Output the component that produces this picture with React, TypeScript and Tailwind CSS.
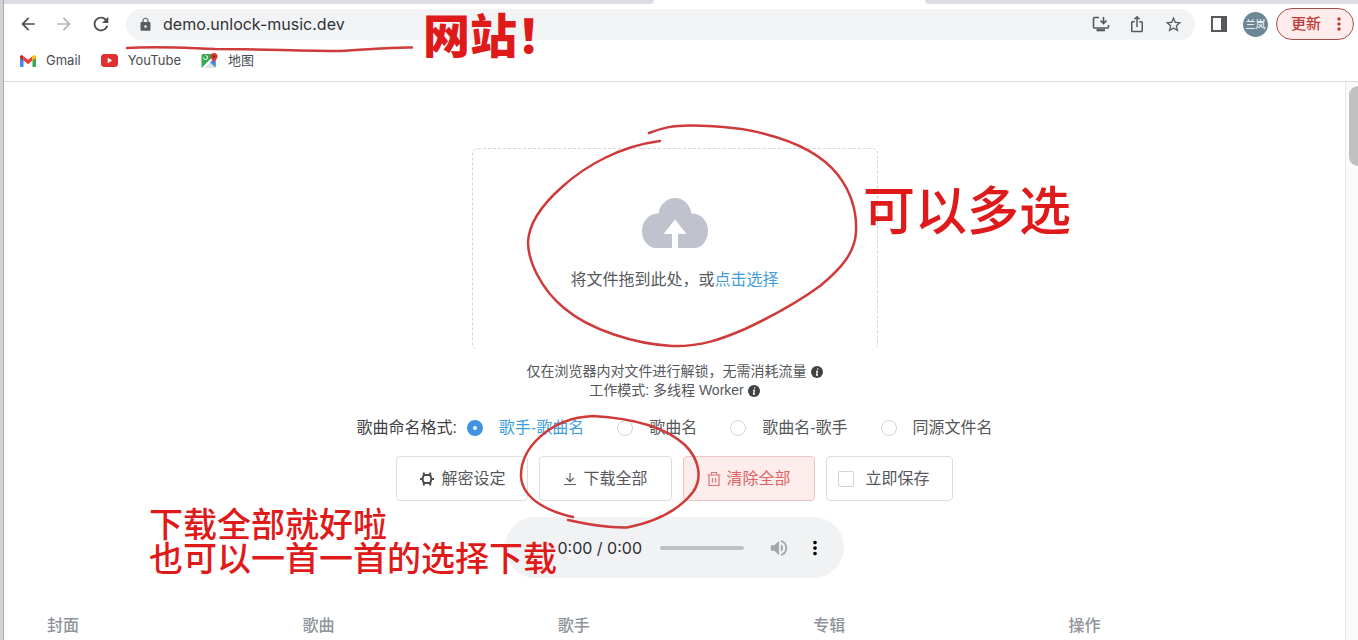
import { useState } from 'react'
import {
  MdArrowBack,
  MdArrowForward,
  MdRefresh,
  MdLock,
  MdIosShare,
  MdStarBorder,
  MdMoreVert,
  MdVolumeUp
} from 'react-icons/md'

const formats = [
  { id: 'artist-title', label: '歌手-歌曲名' },
  { id: 'title', label: '歌曲名' },
  { id: 'title-artist', label: '歌曲名-歌手' },
  { id: 'same', label: '同源文件名' }
]

const columns = ['封面', '歌曲', '歌手', '专辑', '操作']

function GmailIcon() {
  return (
    <svg viewBox="0 0 16 12" className="h-3 w-4">
      <path d="M0 1.5V11a1 1 0 0 0 1 1h2.5V4.5z" fill="#4285f4" />
      <path d="M16 1.5V11a1 1 0 0 1-1 1h-2.5V4.5z" fill="#34a853" />
      <path d="M12.5 1.2 8 4.8 3.5 1.2v4.4L8 9.2l4.5-3.6z" fill="#ea4335" />
      <path d="M0 1.8C0 .2 1.6-.3 2.8.6l.7.6v4.4L0 3z" fill="#c5221f" />
      <path d="M16 1.8C16 .2 14.400-.3 13.200.6l-.7.6v4.400L16 3z" fill="#fbbc04" />
    </svg>
  )
}

function YouTubeIcon() {
  return (
    <svg viewBox="0 0 17 13" className="h-[13px] w-[17px]">
      <rect width="17" height="13" rx="3.500" fill="#e02f2f" />
      <path d="M6.700 3.800v5.400l4.600-2.700z" fill="#fff" />
    </svg>
  )
}

function MapIcon() {
  return (
    <svg viewBox="0 0 17 16" className="h-4 w-[17px]">
      <rect x="0.500" y="1" width="14" height="14" rx="1.500" fill="#34a853" />
      <path d="M1 15 8 8l6.500 6.500-.5.5z" fill="#dfe3e8" />
      <path d="m8 8 6.500-6v12z" fill="#4285f4" />
      <path d="m1 14.500 11-11 1.500 1.500-10 10z" fill="#fff" />
      <path d="M2.500 4.500a2 2 0 1 0 2-2" stroke="#fff" strokeWidth="1" fill="none" />
      <path d="M13 0a3.600 3.600 0 0 0-3.600 3.600C9.400 6 12 7 13 10c1-3 3.600-4 3.600-6.400A3.600 3.600 0 0 0 13 0z" fill="#d93a30" />
      <circle cx="13" cy="3.600" r="1.200" fill="#8c1d18" />
    </svg>
  )
}

function InstallIcon() {
  return (
    <svg viewBox="0 0 18 16" className="h-4 w-[18px]" fill="none" stroke="#55585c" strokeWidth="1.600">
      <path d="M7 1.500H2.500a1 1 0 0 0-1 1v8.500a1 1 0 0 0 1 1h13a1 1 0 0 0 1-1V9" />
      <path d="M4.500 14.200h8.500" strokeWidth="2.200" />
      <path d="M11.500 1v6M8.500 4.500l3 3 3-3" />
    </svg>
  )
}

function SidePanelIcon() {
  return (
    <svg viewBox="0 0 16 16" className="h-4 w-4">
      <rect x="1" y="1" width="14" height="14" fill="none" stroke="#55585c" strokeWidth="2" />
      <path d="M10 1h5v14h-5z" fill="#55585c" />
    </svg>
  )
}

function CloudIcon() {
  return (
    <svg viewBox="0 0 66 50" className="h-[50px] w-[66px]">
      <path
        d="M30 50H14A14 17 0 0 1 0 32.500C0 23 7 15.500 16.500 15.500 18 6 25 0 33 0s15 6 16.500 15.500C59 15.500 66 23 66 32.500A14 17 0 0 1 53 50H36V36h8.500L33 21.500 21.500 36H30z"
        fill="#c0c3ce"
      />
    </svg>
  )
}

function GearIcon() {
  return (
    <svg viewBox="0 0 16 16" className="h-4 w-4" fill="none" stroke="#4a4c50" strokeWidth="2">
      <path d="M4.800 4h6.400l1.300 4-1.300 4H4.800L3.500 8z" />
      <path d="M4.800 1.500V4M11.200 1.500V4M4.800 12v2.500M11.200 12v2.500M1 8h2.500M12.500 8H15" />
    </svg>
  )
}

function DownloadIcon() {
  return (
    <svg viewBox="0 0 14 14" className="h-3.5 w-3.5" fill="none" stroke="#5c5e62" strokeWidth="1.200">
      <path d="M7 1v8.500M3.300 6 7 9.700 10.700 6M1 12.500h12" />
    </svg>
  )
}

function TrashIcon() {
  return (
    <svg viewBox="0 0 14 16" className="h-4 w-3.5" fill="none" stroke="#de7474" strokeWidth="1.200">
      <path d="M.5 4h13M4.500 4V1.500h5V4M2 4v10.500h10V4M5.500 7v4.500M8.500 7v4.500" />
    </svg>
  )
}

function InfoIcon() {
  return (
    <svg viewBox="0 0 12 12" className="h-3 w-3">
      <circle cx="6" cy="6" r="6" fill="#3f4145" />
      <path d="M6.800 2.300 6.500 3.700M5 5.300h1.300L5.600 9H7" stroke="#fff" strokeWidth="1.300" fill="none" />
    </svg>
  )
}

function BrowserBar() {
  return (
    <header className="border-b border-[#dcdcde] bg-white">
      <div className="flex h-1 justify-between">
        <div className="w-[48%] rounded-br bg-[#dcdde4]" />
        <div className="w-[32%] rounded-bl bg-[#dcdde4]" />
      </div>
      <div className="mt-1 flex h-8 items-center pl-3.5 pr-1">
        <div className="flex items-center gap-4 text-[#4b4d51]">
          <button aria-label="后退"><MdArrowBack size={20} /></button>
          <button aria-label="前进" className="text-[#b4b5b8]"><MdArrowForward size={20} /></button>
          <button aria-label="重新加载"><MdRefresh size={22} /></button>
        </div>
        <div className="ml-3.5 flex h-[31px] min-w-0 flex-1 items-center gap-2.5 rounded-full bg-[#f2f3f5] px-3">
          <MdLock size={15} className="shrink-0 text-[#5a5c60]" />
          <input
            aria-label="地址栏"
            defaultValue="demo.unlock-music.dev"
            className="min-w-0 flex-1 bg-transparent font-['Inter','Noto_Sans_CJK_SC',sans-serif] text-base text-[#303236] outline-none"
          />
          <div className="flex items-center gap-[18px] text-[#55585c]">
            <button aria-label="安装"><InstallIcon /></button>
            <button aria-label="分享"><MdIosShare size={18} /></button>
            <button aria-label="收藏"><MdStarBorder size={19} /></button>
          </div>
        </div>
        <button aria-label="侧边栏" className="ml-4"><SidePanelIcon /></button>
        <div className="ml-4 flex size-[25px] items-center justify-center rounded-full bg-[#6d8796] text-[10px] text-white">
          兰岚
        </div>
        <button className="ml-2 flex h-8 items-center gap-2 rounded-full border border-[#a94d4b] bg-[#fdeceb] pl-3.5 pr-1 text-[15px] font-medium text-[#bf3a33]">
          更新
          <MdMoreVert size={20} />
        </button>
      </div>
      <nav className="flex h-[41px] items-center gap-5 pl-4 font-['Inter','Noto_Sans_CJK_SC',sans-serif] text-[13px] text-[#4a4c50]">
        <a href="#gmail" className="flex items-center gap-2.5"><GmailIcon />Gmail</a>
        <a href="#youtube" className="flex items-center gap-2.5"><YouTubeIcon />YouTube</a>
        <a href="#maps" className="flex items-center gap-2.5"><MapIcon />地图</a>
      </nav>
    </header>
  )
}

// Hand-drawn marks and notes laid over the page
function Notes() {
  return (
    <div lang="zh-CN" className="pointer-events-none absolute left-0 top-0 text-[#df1a1a]">
      <svg width="1358" height="640" viewBox="0 0 1358 640" fill="none" stroke="#cf3a3a" strokeWidth="2.500" strokeLinecap="round">
        <path d="M127 48C160 46 185 48 215 49C260 49 300 51 340 51C365 50 390 47 412 47.500" />
        <path d="M649 133C662 128 672 125.500 690 125.500C720 126 745 128 765 134C800 143 824 157 838 175C851 192 857 212 856 232C855 252 842 268 820 286C798 302 775 315 745 329C722 339 700 347 672 346C635 344 590 330 564 308C542 290 528 262 528 242C529 222 545 202 562 187C585 166 620 146 660 141" />
        <path d="M573 517C550 512 523 500 521 477C520 448 550 418 593 416C630 418 664 426 685 445C699 459 703 478 693 492C679 510 655 522 627 527.500C607 528 590 525 568 520" />
      </svg>
      <p className="absolute left-[423px] top-[13px] whitespace-nowrap text-[47px] font-black leading-[48px]">{'网站\uff01'}</p>
      <p className="absolute left-[863px] top-[186px] whitespace-nowrap text-[52px] font-medium leading-[52px]">可以多选</p>
      <p className="absolute left-[149px] top-[508px] whitespace-nowrap text-[34px] font-medium leading-[34px]">
        下载全部就好啦
        <br />
        也可以一首一首的选择下载
      </p>
    </div>
  )
}

export default function App() {
  const [format, setFormat] = useState('artist-title')
  const [instant, setInstant] = useState(false)

  return (
    <div lang="zh-CN" className="relative flex h-screen overflow-hidden bg-white font-['Liberation_Sans','Noto_Sans_CJK_SC',sans-serif]">
      <div className="w-1 shrink-0 border-r border-[#a9a9ab] bg-[#d2d2d3]" />

      <div className="flex min-w-0 flex-1 flex-col">
        <BrowserBar />

        <div className="flex min-h-0 flex-1">
          <main className="flex min-w-0 flex-1 flex-col items-center pt-[66px] text-base text-[#55575b]">
            {/* Upload area */}
            <section className="flex h-[202px] w-full max-w-[406px] shrink-0 flex-col items-center rounded-md border border-b-0 border-dashed border-[#d4d5d8] pt-[49px]">
              <CloudIcon />
              <p className="mt-5 leading-6">
                {'将文件拖到此处\uff0c或'}<a href="#select" className="text-[#409edc]">点击选择</a>
              </p>
            </section>

            <div className="mt-3 text-center text-sm leading-[19px]">
              <p className="flex items-center justify-center gap-1">{'仅在浏览器内对文件进行解锁\uff0c无需消耗流量'} <InfoIcon /></p>
              <p className="flex items-center justify-center gap-1">工作模式: 多线程 Worker <InfoIcon /></p>
            </div>

            {/* Naming format */}
            <div role="radiogroup" aria-labelledby="format-label" className="mt-3 flex h-8 shrink-0 items-center">
              <span id="format-label" className="mr-2.5 text-[#3f4145]">歌曲命名格式:</span>
              <div className="flex items-center gap-[33px]">
                {formats.map(f => (
                  <label key={f.id} className={`flex items-center gap-4 ${format === f.id ? 'text-[#409edc]' : ''}`}>
                    <input
                      type="radio"
                      name="format"
                      checked={format === f.id}
                      onChange={() => setFormat(f.id)}
                      className="size-4 appearance-none rounded-full border border-[#d3d4d8] bg-white checked:border-[6px] checked:border-[#3f93e0]"
                    />
                    {f.label}
                  </label>
                ))}
              </div>
            </div>

            {/* Actions */}
            <div className="mt-3 flex shrink-0 gap-[11px]">
              <button className="flex h-[45px] items-center gap-1.5 rounded border border-[#dcdde0] px-[22px]"><GearIcon />解密设定</button>
              <button className="flex h-[45px] items-center gap-1.5 rounded border border-[#dcdde0] px-[23px]"><DownloadIcon />下载全部</button>
              <button className="flex h-[45px] items-center gap-1.5 rounded border border-[#ecc4c4] bg-[#fdecec] px-[23px] text-[#de6464]"><TrashIcon />清除全部</button>
              <label className="flex h-[45px] items-center gap-3 rounded border border-[#dcdde0] pl-[11px] pr-[22px]">
                <input
                  type="checkbox"
                  checked={instant}
                  onChange={e => setInstant(e.target.checked)}
                  className="size-4 appearance-none rounded-xs border border-[#d3d4d8] bg-white checked:bg-[#3f93e0]"
                />
                立即保存
              </label>
            </div>

            {/* Player */}
            <div className="mt-4 flex h-[61px] w-full max-w-[339px] shrink-0 items-center justify-end rounded-full bg-[#f1f2f4] pr-[18px]">
              <span className="font-['Inter',sans-serif] text-base text-[#2c2d30]">0:00 / 0:00</span>
              <div className="ml-[18px] h-1 w-[84px] rounded-full bg-[#bfc0c2]" />
              <button aria-label="音量" className="ml-6 text-[#a5a6a8]"><MdVolumeUp size={22} /></button>
              <button aria-label="更多" className="ml-3.5 text-black"><MdMoreVert size={22} /></button>
            </div>

            <div className="mt-6 w-full px-8">
              <table className="w-full table-fixed text-left text-[#909399]">
                <thead>
                  <tr className="h-12">
                    {columns.map(c => (
                      <th key={c} className="pl-[11px] font-medium">{c}</th>
                    ))}
                  </tr>
                </thead>
              </table>
            </div>
          </main>

          <div className="w-[13px] shrink-0 border-l border-[#e8e8e8] bg-[#fafafa] pl-[3px] pt-1">
            <div className="h-20 rounded-l-full bg-[#c1c1c1]" />
          </div>
        </div>
      </div>

      <Notes />
    </div>
  )
}
